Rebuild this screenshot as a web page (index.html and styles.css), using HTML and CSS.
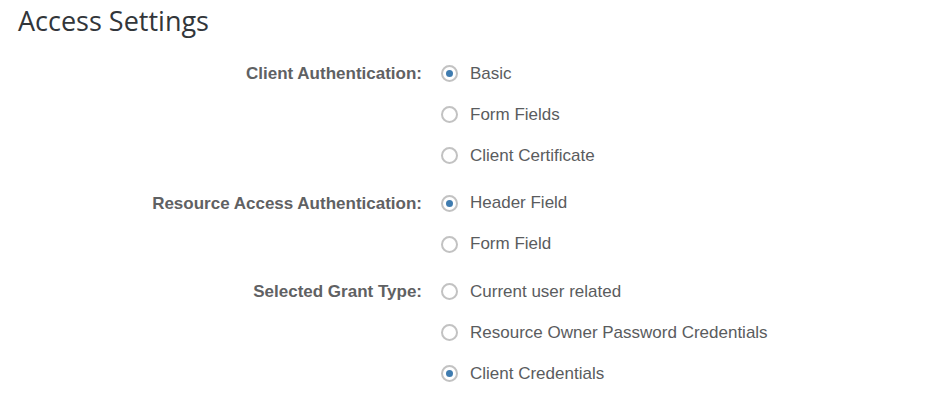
FILE: index.html
```html
<!DOCTYPE html>
<html>
<head>
<meta charset="utf-8">
<link rel="stylesheet" href="styles.css">
</head>
<body>
<h1 class="title">Access Settings</h1>
<div class="form">
  <div class="field">
    <div class="label">Client Authentication:</div>
    <div class="options">
      <label class="option"><span class="radio checked"></span><span class="text">Basic</span></label>
      <label class="option"><span class="radio"></span><span class="text">Form Fields</span></label>
      <label class="option"><span class="radio"></span><span class="text">Client Certificate</span></label>
    </div>
  </div>
  <div class="field">
    <div class="label">Resource Access Authentication:</div>
    <div class="options">
      <label class="option"><span class="radio checked"></span><span class="text">Header Field</span></label>
      <label class="option"><span class="radio"></span><span class="text">Form Field</span></label>
    </div>
  </div>
  <div class="field">
    <div class="label">Selected Grant Type:</div>
    <div class="options">
      <label class="option"><span class="radio"></span><span class="text">Current user related</span></label>
      <label class="option"><span class="radio"></span><span class="text">Resource Owner Password Credentials</span></label>
      <label class="option"><span class="radio checked"></span><span class="text">Client Credentials</span></label>
    </div>
  </div>
</div>
</body>
</html>
```
FILE: styles.css
```css
html, body {
  margin: 0;
  padding: 0;
  background: #ffffff;
}
body {
  font-family: "Liberation Sans", Arial, sans-serif;
  color: #5a5c5e;
}
.title {
  margin: 0;
  padding: 3px 0 0 18px;
  font-family: "Open Sans", sans-serif;
  font-weight: 400;
  font-size: 27px;
  line-height: 36px;
  color: #32363a;
}
.form {
  display: flex;
  flex-direction: column;
  gap: 6.5px;
  padding-top: 14px;
}
.field {
  display: grid;
  grid-template-columns: 422px 1fr;
  column-gap: 19px;
}
.label {
  text-align: right;
  font-weight: 700;
  font-size: 17px;
  line-height: 41px;
  color: #5f6163;
}
.options {
  display: flex;
  flex-direction: column;
}
.option {
  display: flex;
  align-items: center;
  height: 41px;
  gap: 12px;
  font-size: 17px;
  color: #5a5c5e;
}
.radio {
  box-sizing: border-box;
  width: 17px;
  height: 17px;
  border: 2px solid #c2c2c2;
  border-radius: 50%;
  display: flex;
  align-items: center;
  justify-content: center;
}
.radio.checked::after {
  content: "";
  width: 7px;
  height: 7px;
  border-radius: 50%;
  background: #3f7cb0;
}
```
